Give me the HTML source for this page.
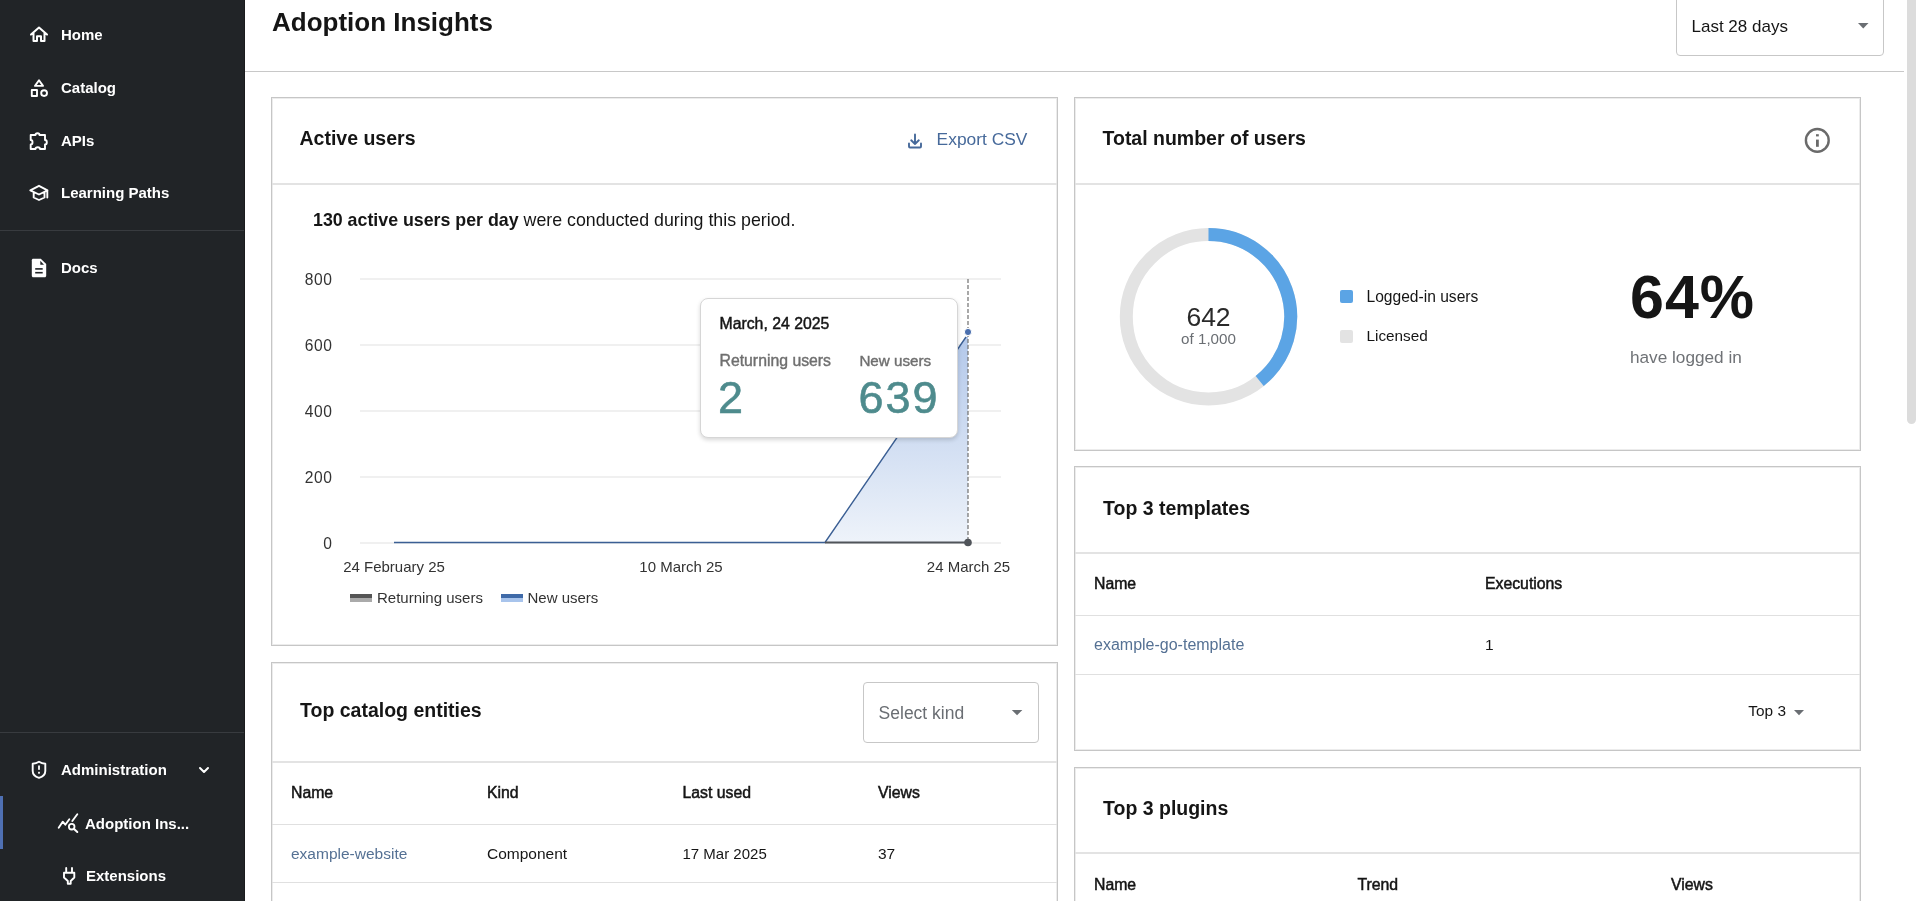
<!DOCTYPE html>
<html><head><meta charset="utf-8"><style>
html,body{margin:0;padding:0;width:1917px;height:901px;overflow:hidden;background:#fff;font-family:"Liberation Sans", sans-serif;}
.t{position:absolute;white-space:nowrap;font-family:"Liberation Sans", sans-serif;}
#root{position:absolute;left:0;top:0;width:1917px;height:901px;will-change:transform;}
b{font-weight:700;}
</style></head><body><div id="root">
<div style="position:absolute;left:0px;top:0px;width:245px;height:901px;background:#212427;"></div>
<div style="position:absolute;left:0px;top:230px;width:245px;height:1px;background:#383b3f;"></div>
<div style="position:absolute;left:0px;top:732px;width:245px;height:1px;background:#383b3f;"></div>
<div style="position:absolute;left:0px;top:796px;width:3px;height:53px;background:#4f70b3;"></div>
<div style="position:absolute;left:244px;top:0px;width:1px;height:901px;background:#1a1b1d;"></div>
<div class="t" style="left:61px;top:27.30px;font-size:15px;line-height:15px;font-weight:700;color:#ffffff;">Home</div>
<div class="t" style="left:61px;top:80.30px;font-size:15px;line-height:15px;font-weight:700;color:#ffffff;">Catalog</div>
<div class="t" style="left:61px;top:133.30px;font-size:15px;line-height:15px;font-weight:700;color:#ffffff;">APIs</div>
<div class="t" style="left:61px;top:185.30px;font-size:15px;line-height:15px;font-weight:700;color:#ffffff;">Learning Paths</div>
<div class="t" style="left:61px;top:260.30px;font-size:15px;line-height:15px;font-weight:700;color:#ffffff;">Docs</div>
<div class="t" style="left:61px;top:762.30px;font-size:15px;line-height:15px;font-weight:700;color:#ffffff;">Administration</div>
<div class="t" style="left:85px;top:815.80px;font-size:15px;line-height:15px;font-weight:700;color:#ffffff;">Adoption Ins...</div>
<div class="t" style="left:86px;top:868.30px;font-size:15px;line-height:15px;font-weight:700;color:#ffffff;">Extensions</div>
<svg width="245" height="901" style="position:absolute;left:0;top:0" fill="none" stroke="#fff" stroke-width="2" stroke-linejoin="round" stroke-linecap="round">
<path d="M31 34.6 L39 27.6 L47 34.6 M33.5 33 V41 H37 V36.2 H41 V41 H44.5 V33"/>
<path d="M39 80.3 L43 85.9 H35 Z" stroke-width="1.9"/>
<rect x="31.8" y="90" width="5.2" height="6" stroke-width="1.9"/>
<circle cx="44.1" cy="93.1" r="2.9" stroke-width="1.9"/>
<path d="M30.7 135 H35.5 C35.5 132.6 39.5 132.6 39.5 135 H45 V140 C47.4 140 47.4 144.5 45 144.5 V149 H40 C40 146.6 35.5 146.6 35.5 149 H30.7 V144.5 C33.1 144.5 33.1 140 30.7 140 Z" stroke-width="1.9"/>
<path d="M30.3 190.3 L39 185.8 L47.5 190.3 L39 194.5 Z M33.7 192.5 V197.5 L39 200 L44.5 197.5 V192.5 M47.3 190.3 V197.5" stroke-width="1.9"/>
<path d="M39 761.8 C41 763 43 763.6 45.3 763.8 V771 C45.3 774.5 42.5 776.8 39 777.8 C35.5 776.8 32.7 774.5 32.7 771 V763.8 C35 763.6 37 763 39 761.8 Z" stroke-width="1.9"/>
<path d="M200 768 L204 772 L208 768" stroke-width="2"/>
<path d="M58.7 827.7 L62.7 821.7 L65.3 824.7 L69.3 819.3 M72.3 821 L77.3 814.3" stroke-width="1.9"/>
<circle cx="71.7" cy="826.7" r="2.8" stroke-width="1.8"/>
<path d="M73.8 828.8 L77.3 832" stroke-width="2"/>
<path d="M66.2 868 V871.5 M72 868 V871.5 M64 872.7 H74.3 V877.5 L70.7 881 V883.7 H67.8 V881 L64 877.5 Z" stroke-width="1.9"/>
</svg>
<svg width="245" height="901" style="position:absolute;left:0;top:0">
<path d="M33.3 258.7 H40.8 L46.2 264.1 V275.7 C46.2 276.6 45.6 277.2 44.7 277.2 H33.3 C32.4 277.2 31.8 276.6 31.8 275.7 V260.2 C31.8 259.3 32.4 258.7 33.3 258.7 Z" fill="#fff"/>
<path d="M40.3 260.8 V264.7 H44 Z" fill="#212427"/>
<rect x="35.2" y="268.1" width="7.5" height="1.6" fill="#212427"/>
<rect x="35.2" y="271.9" width="7.5" height="1.6" fill="#212427"/>
<rect x="38.1" y="765.5" width="1.8" height="4.3" fill="#fff"/>
<rect x="38.1" y="771.8" width="1.8" height="1.9" fill="#fff"/>
</svg>
<div class="t" style="left:272px;top:8.99px;font-size:26px;line-height:26px;font-weight:700;color:#151515;">Adoption Insights</div>
<div style="position:absolute;left:245px;top:71px;width:1659px;height:1px;background:#c8c8c8;"></div>
<div style="position:absolute;left:1676px;top:-10px;width:206px;height:64px;border:1px solid #c7c7c7;border-radius:4px;background:#fff"></div>
<div class="t" style="left:1691.5px;top:17.61px;font-size:17px;line-height:17px;font-weight:400;color:#151515;">Last 28 days</div>
<svg style="position:absolute;left:0;top:0" width="1917" height="901"><path d="M1858 23 H1868.5 L1863.25 28.5 Z" fill="#6a6e73"/></svg>
<div style="position:absolute;left:1907px;top:-10px;width:9px;height:434px;background:#dcdcdc;border-radius:4.5px;"></div>
<div style="position:absolute;left:271px;top:97px;width:785px;height:547px;border:1px solid #c6c6c6;box-shadow:inset 0 0 0 1px #ececec;background:#fff"></div>
<div style="position:absolute;left:272px;top:183px;width:785px;height:2px;background:#e3e3e3;"></div>
<div class="t" style="left:299.5px;top:129.49px;font-size:19.5px;line-height:19.5px;font-weight:700;color:#151515;">Active users</div>
<svg style="position:absolute;left:0;top:0" width="1917" height="901" fill="none" stroke="#46699a" stroke-width="2">
<path d="M915 134.5 V144 M911.2 140.3 L915 144 L918.8 140.3 M909 143.5 V146.5 Q909 147.5 910 147.5 H920 Q921 147.5 921 146.5 V143.5" stroke-width="1.9" stroke-linecap="round" stroke-linejoin="round"/></svg>
<div class="t" style="left:936.6px;top:131.27px;font-size:17.4px;line-height:17.4px;font-weight:400;color:#46699a;">Export CSV</div>
<div class="t" style="left:313px;top:212.33px;font-size:17.8px;line-height:17.8px;font-weight:400;color:#151515;"><b>130 active users per day</b> were conducted during this period.</div>
<div style="position:absolute;left:360px;top:278px;width:641px;height:2px;background:#f0f0f0;"></div>
<div class="t" style="right:1584.4px;top:271.59px;font-size:15.6px;line-height:15.6px;font-weight:400;color:#333333;text-align:right;letter-spacing:0.6px;">800</div>
<div style="position:absolute;left:360px;top:344px;width:641px;height:2px;background:#f0f0f0;"></div>
<div class="t" style="right:1584.4px;top:337.59px;font-size:15.6px;line-height:15.6px;font-weight:400;color:#333333;text-align:right;letter-spacing:0.6px;">600</div>
<div style="position:absolute;left:360px;top:410px;width:641px;height:2px;background:#f0f0f0;"></div>
<div class="t" style="right:1584.4px;top:403.59px;font-size:15.6px;line-height:15.6px;font-weight:400;color:#333333;text-align:right;letter-spacing:0.6px;">400</div>
<div style="position:absolute;left:360px;top:476px;width:641px;height:2px;background:#f0f0f0;"></div>
<div class="t" style="right:1584.4px;top:469.59px;font-size:15.6px;line-height:15.6px;font-weight:400;color:#333333;text-align:right;letter-spacing:0.6px;">200</div>
<div style="position:absolute;left:360px;top:542px;width:641px;height:2px;background:#f0f0f0;"></div>
<div class="t" style="right:1584.4px;top:535.59px;font-size:15.6px;line-height:15.6px;font-weight:400;color:#333333;text-align:right;letter-spacing:0.6px;">0</div>
<div class="t" style="left:244px;width:300px;text-align:center;top:559.30px;font-size:15px;line-height:15px;font-weight:400;color:#333333;">24 February 25</div>
<div class="t" style="left:531px;width:300px;text-align:center;top:559.30px;font-size:15px;line-height:15px;font-weight:400;color:#333333;">10 March 25</div>
<div class="t" style="left:818.5px;width:300px;text-align:center;top:559.30px;font-size:15px;line-height:15px;font-weight:400;color:#333333;">24 March 25</div>
<svg style="position:absolute;left:0;top:0" width="1917" height="901">
<defs><linearGradient id="g1" x1="0" y1="0" x2="0" y2="1"><stop offset="0" stop-color="#b3c8ea"/><stop offset="1" stop-color="#eef3fa"/></linearGradient></defs>
<path d="M825 542.5 L966 337 H968 V542.5 Z" fill="url(#g1)"/>
<path d="M394 542.5 H825 L966 337" fill="none" stroke="#3b5f94" stroke-width="1.4"/>
<path d="M825 542.5 H968" fill="none" stroke="#50545a" stroke-width="2"/>
<path d="M968 279 V542" stroke="#707070" stroke-width="1.2" stroke-dasharray="4 2"/>
<circle cx="968" cy="332" r="3.6" fill="#4a6fae" stroke="#fff" stroke-width="1"/>
<circle cx="968" cy="542.5" r="3.8" fill="#50545a"/>
<rect x="350" y="594" width="22" height="4" fill="#555"/><rect x="350" y="598" width="22" height="4" fill="#aaa"/>
<rect x="501" y="594" width="22" height="4" fill="#3f6aa8"/><rect x="501" y="598" width="22" height="4" fill="#a8c4ec"/>
</svg>
<div class="t" style="left:377px;top:590.30px;font-size:15px;line-height:15px;font-weight:400;color:#333333;">Returning users</div>
<div class="t" style="left:527.5px;top:590.30px;font-size:15px;line-height:15px;font-weight:400;color:#333333;">New users</div>
<div style="position:absolute;left:700px;top:298px;width:256px;height:138px;border:1px solid #d6d6d6;border-radius:8px;background:#fff;box-shadow:0 2px 4px rgba(0,0,0,0.16)"></div>
<div class="t" style="left:719.5px;top:315.63px;font-size:15.8px;line-height:15.8px;font-weight:400;color:#151515;-webkit-text-stroke:0.45px #151515;">March, 24 2025</div>
<div class="t" style="left:719.5px;top:352.63px;font-size:15.8px;line-height:15.8px;font-weight:400;color:#6f6f6f;-webkit-text-stroke:0.4px #6f6f6f;">Returning users</div>
<div class="t" style="left:859.4px;top:353.13px;font-size:15.2px;line-height:15.2px;font-weight:400;color:#6f6f6f;-webkit-text-stroke:0.4px #6f6f6f;">New users</div>
<div class="t" style="left:718px;top:375.11px;font-size:45px;line-height:45px;font-weight:400;color:#4e8b8d;-webkit-text-stroke:0.6px #4e8b8d;">2</div>
<div class="t" style="left:858.5px;top:375.11px;font-size:45px;line-height:45px;font-weight:400;color:#4e8b8d;-webkit-text-stroke:0.6px #4e8b8d;letter-spacing:2px;">639</div>
<div style="position:absolute;left:271px;top:662px;width:785px;height:258px;border:1px solid #c6c6c6;box-shadow:inset 0 0 0 1px #ececec;background:#fff"></div>
<div style="position:absolute;left:272px;top:761px;width:785px;height:2px;background:#e3e3e3;"></div>
<div class="t" style="left:300px;top:701.49px;font-size:19.5px;line-height:19.5px;font-weight:700;color:#151515;">Top catalog entities</div>
<div style="position:absolute;left:863px;top:682px;width:174px;height:59px;border:1px solid #c7c7c7;border-radius:4px;background:#fff"></div>
<div class="t" style="left:878.6px;top:705.09px;font-size:17.5px;line-height:17.5px;font-weight:400;color:#6a6e73;">Select kind</div>
<svg style="position:absolute;left:0;top:0" width="1917" height="901"><path d="M1011.8 710 H1022.4 L1017.1 715.2 Z" fill="#6a6e73"/></svg>
<div class="t" style="left:291px;top:785.03px;font-size:15.8px;line-height:15.8px;font-weight:400;color:#151515;-webkit-text-stroke:0.5px #151515;">Name</div>
<div class="t" style="left:487px;top:785.03px;font-size:15.8px;line-height:15.8px;font-weight:400;color:#151515;-webkit-text-stroke:0.5px #151515;">Kind</div>
<div class="t" style="left:682.5px;top:785.03px;font-size:15.8px;line-height:15.8px;font-weight:400;color:#151515;-webkit-text-stroke:0.5px #151515;">Last used</div>
<div class="t" style="left:878px;top:785.03px;font-size:15.8px;line-height:15.8px;font-weight:400;color:#151515;-webkit-text-stroke:0.5px #151515;">Views</div>
<div style="position:absolute;left:272px;top:824px;width:785px;height:1px;background:#e0e0e0;"></div>
<div class="t" style="left:291px;top:845.58px;font-size:15.5px;line-height:15.5px;font-weight:400;color:#557194;">example-website</div>
<div class="t" style="left:487px;top:845.58px;font-size:15.5px;line-height:15.5px;font-weight:400;color:#151515;">Component</div>
<div class="t" style="left:682.5px;top:846.00px;font-size:15px;line-height:15px;font-weight:400;color:#151515;">17 Mar 2025</div>
<div class="t" style="left:878px;top:845.58px;font-size:15.5px;line-height:15.5px;font-weight:400;color:#151515;">37</div>
<div style="position:absolute;left:272px;top:882px;width:785px;height:1px;background:#e0e0e0;"></div>
<div style="position:absolute;left:1074px;top:97px;width:785px;height:352px;border:1px solid #c6c6c6;box-shadow:inset 0 0 0 1px #ececec;background:#fff"></div>
<div style="position:absolute;left:1075px;top:183px;width:785px;height:2px;background:#e3e3e3;"></div>
<div class="t" style="left:1102.5px;top:129.49px;font-size:19.5px;line-height:19.5px;font-weight:700;color:#151515;">Total number of users</div>
<svg style="position:absolute;left:0;top:0" width="1917" height="901">
<circle cx="1817.3" cy="140.4" r="11.4" fill="none" stroke="#6a6a6a" stroke-width="2.4"/>
<rect x="1816" y="134.2" width="2.8" height="2.2" fill="#6a6a6a"/>
<rect x="1816" y="139.6" width="2.8" height="7.2" fill="#6a6a6a"/>
<circle cx="1208.5" cy="316.7" r="82.2" fill="none" stroke="#e3e3e3" stroke-width="13"/>
</svg>
<svg style="position:absolute;left:0;top:0" width="1917" height="901">
<path d="M1208.5 234.5 A82.2 82.2 0 0 1 1259.67 381.03" fill="none" stroke="#5ba4e5" stroke-width="13"/>
<rect x="1340" y="290" width="13" height="13" rx="2" fill="#5ba4e5"/>
<rect x="1340" y="330" width="13" height="13" rx="2" fill="#e3e3e3"/>
</svg>
<div class="t" style="left:1058.5px;width:300px;text-align:center;top:304.37px;font-size:26.5px;line-height:26.5px;font-weight:400;color:#2a2a2a;">642</div>
<div class="t" style="left:1058.5px;width:300px;text-align:center;top:331.13px;font-size:15.2px;line-height:15.2px;font-weight:400;color:#6a6e73;">of 1,000</div>
<div class="t" style="left:1366.5px;top:288.99px;font-size:15.6px;line-height:15.6px;font-weight:400;color:#151515;">Logged-in users</div>
<div class="t" style="left:1366.5px;top:328.25px;font-size:15.3px;line-height:15.3px;font-weight:400;color:#151515;">Licensed</div>
<div class="t" style="left:1630px;top:266.86px;font-size:61px;line-height:61px;font-weight:700;color:#151515;letter-spacing:1px;">64%</div>
<div class="t" style="left:1630px;top:348.84px;font-size:17.2px;line-height:17.2px;font-weight:400;color:#6f7276;">have logged in</div>
<div style="position:absolute;left:1074px;top:466px;width:785px;height:283px;border:1px solid #c6c6c6;box-shadow:inset 0 0 0 1px #ececec;background:#fff"></div>
<div style="position:absolute;left:1075px;top:552px;width:785px;height:2px;background:#e3e3e3;"></div>
<div class="t" style="left:1103px;top:499.09px;font-size:19.5px;line-height:19.5px;font-weight:700;color:#151515;">Top 3 templates</div>
<div class="t" style="left:1094px;top:576.33px;font-size:15.8px;line-height:15.8px;font-weight:400;color:#151515;-webkit-text-stroke:0.5px #151515;">Name</div>
<div class="t" style="left:1485px;top:576.33px;font-size:15.8px;line-height:15.8px;font-weight:400;color:#151515;-webkit-text-stroke:0.5px #151515;">Executions</div>
<div style="position:absolute;left:1075px;top:615px;width:785px;height:1px;background:#e0e0e0;"></div>
<div class="t" style="left:1094px;top:637.26px;font-size:16px;line-height:16px;font-weight:400;color:#557194;">example-go-template</div>
<div class="t" style="left:1485px;top:636.68px;font-size:15.5px;line-height:15.5px;font-weight:400;color:#151515;">1</div>
<div style="position:absolute;left:1075px;top:674px;width:785px;height:1px;background:#e0e0e0;"></div>
<div class="t" style="left:1748.3px;top:702.66px;font-size:15.4px;line-height:15.4px;font-weight:400;color:#151515;">Top 3</div>
<svg style="position:absolute;left:0;top:0" width="1917" height="901"><path d="M1794 710 H1804 L1799 715.3 Z" fill="#6a6e73"/></svg>
<div style="position:absolute;left:1074px;top:767px;width:785px;height:158px;border:1px solid #c6c6c6;box-shadow:inset 0 0 0 1px #ececec;background:#fff"></div>
<div style="position:absolute;left:1075px;top:852px;width:785px;height:2px;background:#e3e3e3;"></div>
<div class="t" style="left:1103px;top:799.49px;font-size:19.5px;line-height:19.5px;font-weight:700;color:#151515;">Top 3 plugins</div>
<div class="t" style="left:1094px;top:877.13px;font-size:15.8px;line-height:15.8px;font-weight:400;color:#151515;-webkit-text-stroke:0.5px #151515;">Name</div>
<div class="t" style="left:1357.4px;top:877.13px;font-size:15.8px;line-height:15.8px;font-weight:400;color:#151515;-webkit-text-stroke:0.5px #151515;">Trend</div>
<div class="t" style="left:1671px;top:877.13px;font-size:15.8px;line-height:15.8px;font-weight:400;color:#151515;-webkit-text-stroke:0.5px #151515;">Views</div>
</div></body></html>
